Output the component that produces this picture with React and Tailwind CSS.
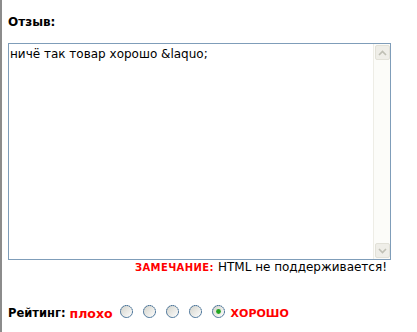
import React from "react";

function Radio({ checked = false, id }) {
  return (
    <svg width="13" height="13" viewBox="0 0 13 13" className="shrink-0 mt-[-1px]">
      <defs>
        <linearGradient id={"g" + id} x1="0" y1="0" x2="1" y2="1">
          <stop offset="0" stopColor="#d2d2ca" />
          <stop offset="1" stopColor="#ffffff" />
        </linearGradient>
      </defs>
      <circle cx="6.5" cy="6.5" r="6" fill={"url(#g" + id + ")"} stroke="#1c5180" strokeWidth="1" strokeDasharray="1.5 0.5" />
      {checked && <circle cx="6.5" cy="6.5" r="2.4" fill="#22a622" />}
    </svg>
  );
}

function ScrollBtn({ up }) {
  return (
    <div className="w-[15px] h-[15px] mx-[1px] rounded-[2px] border border-[#e2e1d8] bg-[#efeee8] flex items-center justify-center">
      <svg width="9" height="6" viewBox="0 0 9 6">
        <path d={up ? "M1 5 L4.5 1.5 L8 5" : "M1 1 L4.5 4.5 L8 1"} fill="none" stroke="#bfbfb4" strokeWidth="1.6" />
      </svg>
    </div>
  );
}

export default function App() {
  return (
    <div className="flex w-[417px] h-[332px] bg-white overflow-hidden" style={{ fontFamily: '"DejaVu Sans", sans-serif' }}>
      <div className="w-[2px] h-full bg-[#8c8c8c]" />
      <div className="flex-1 pl-[6px] flex flex-col">
        <div className="pt-[16px] text-[12px] leading-[13px] font-bold text-black">Отзыв:</div>
        <div className="mt-[14px] w-[383px] h-[217px] border border-[#7f9db9] flex">
          <div className="flex-1 pl-[1px] pt-[3px] text-[12px] leading-[15px] text-black">
            ничё так товар хорошо &amp;laquo;
          </div>
          <div className="w-[17px] h-full bg-[#fcfcf9] border-l border-[#eeede6] flex flex-col justify-between py-[1px]">
            <ScrollBtn up />
            <ScrollBtn />
          </div>
        </div>
        <div className="w-[383px] flex justify-end items-baseline pr-[4px] leading-[15px]">
          <span className="text-[10px] font-bold text-[#ff0000] tracking-[0.4px] mr-[4px]">ЗАМЕЧАНИЕ:</span>
          <span className="text-[12px] text-black">HTML не поддерживается!</span>
        </div>
        <div className="mt-[31px] flex items-start leading-[15px]">
          <span className="text-[11.5px] font-bold text-black">Рейтинг:</span>
          <span className="text-[12.5px] font-bold text-[#ff0000] ml-[4px] mr-[7px]">плохо</span>
          <div className="flex gap-[10px]">
            <Radio id="1" />
            <Radio id="2" />
            <Radio id="3" />
            <Radio id="4" />
            <Radio id="5" checked />
          </div>
          <span className="text-[11px] font-bold text-[#ff0000] ml-[6px]">ХОРОШО</span>
        </div>
      </div>
    </div>
  );
}
